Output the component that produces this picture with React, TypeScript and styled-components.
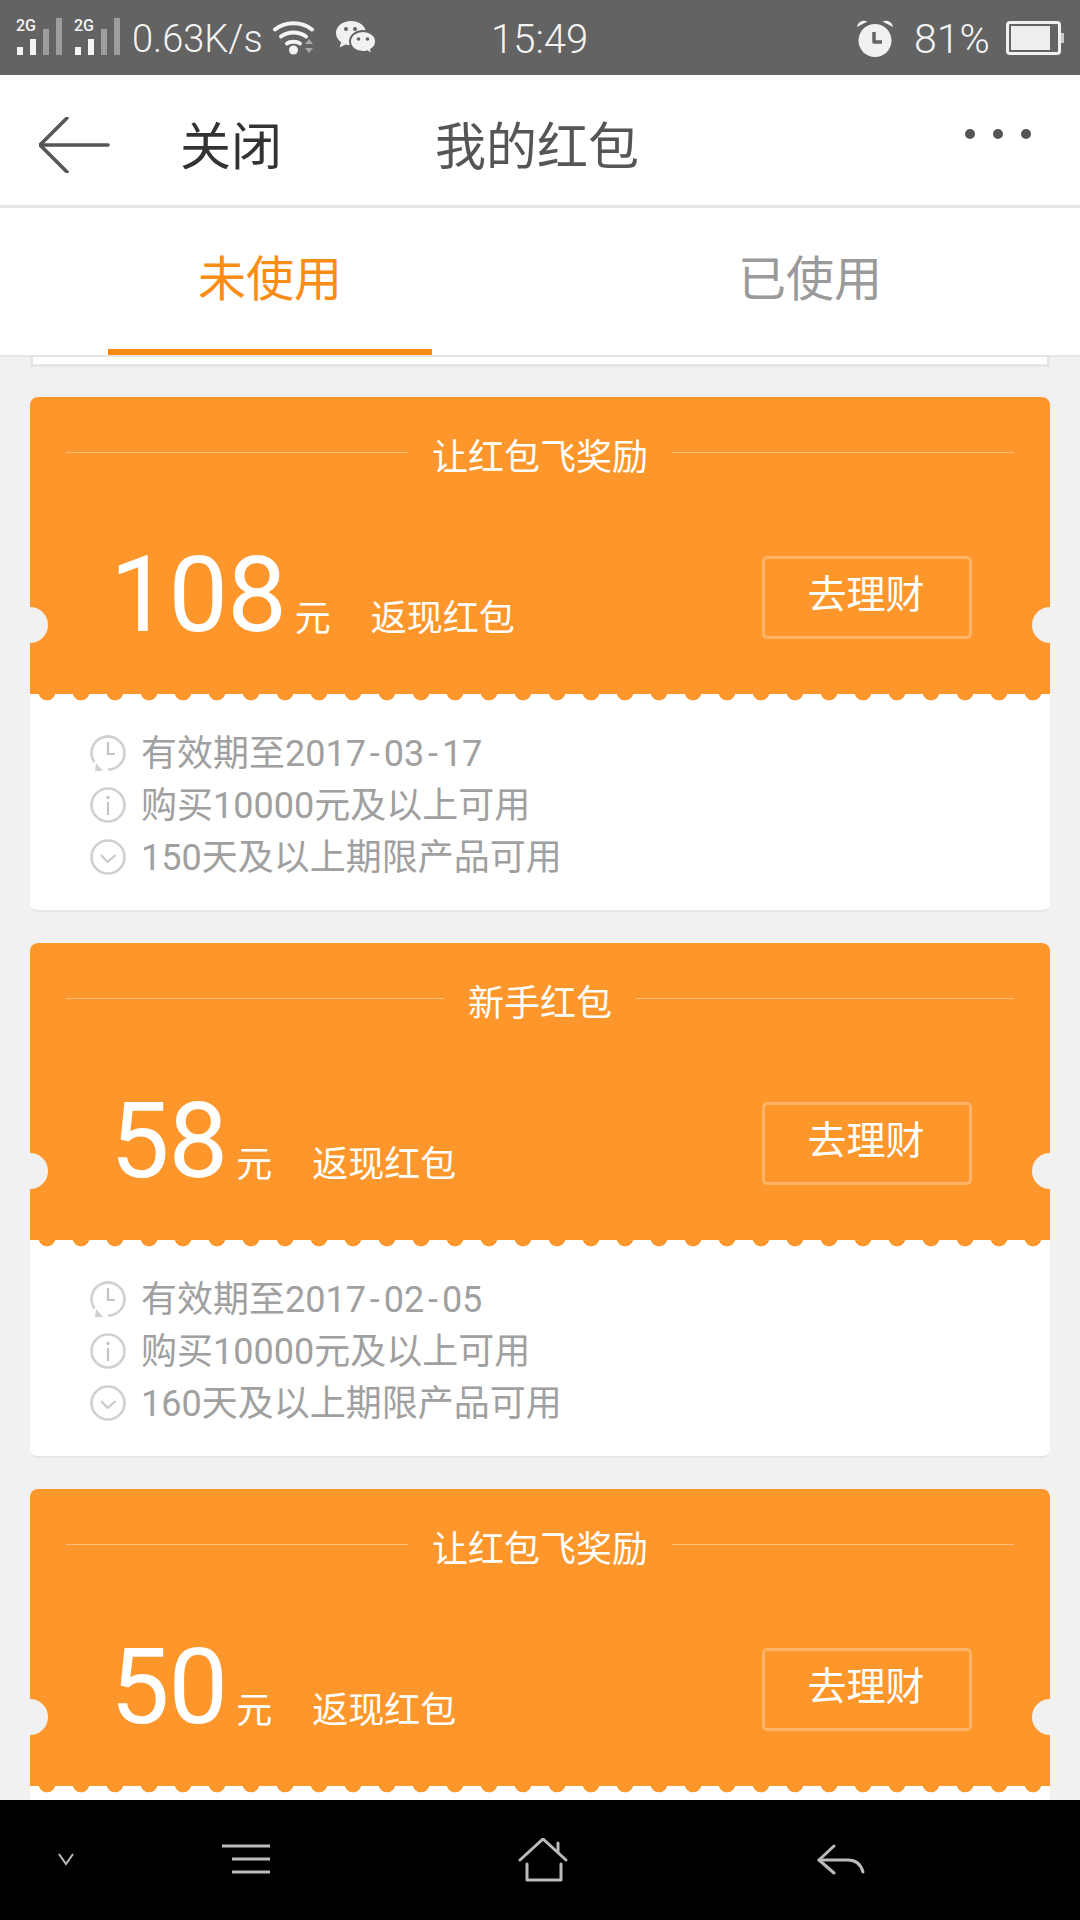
import React from 'react';
import styled, { createGlobalStyle } from 'styled-components';

const orange = '#fe972b';

const GlobalStyle = createGlobalStyle`
  html, body {
    margin: 0;
    padding: 0;
    background: #f1f1f1;
  }
  * {
    box-sizing: border-box;
  }
`;

const Page = styled.div`
  width: 1080px;
  height: 1920px;
  display: flex;
  flex-direction: column;
  overflow: hidden;
  background: #f1f1f1;
  font-family: Roboto, "Noto Sans CJK SC", sans-serif;
`;

const StatusBar = styled.div`
  height: 75px;
  flex: none;
  display: flex;
  align-items: center;
  background: #636363;
  color: #f4f4f4;
  font-weight: 300;
  padding-left: 16px;
`;

const StatusLeft = styled.div`
  width: 475px;
  display: flex;
  align-items: center;
`;

const SignalSvg = styled.svg`
  flex: none;
  margin-top: -11px;
`;

const Speed = styled.span`
  width: 141px;
  padding-top: 3px;
  font-size: 38px;
`;

const WechatSlot = styled.span`
  display: flex;
  margin-left: 20px;
`;

const Clock = styled.span`
  width: 365px;
  padding-top: 3px;
  font-size: 40px;
`;

const Percent = styled.span`
  margin: 0 16px 0 20px;
  padding-top: 3px;
  font-size: 41px;
`;

const Header = styled.div`
  height: 133px;
  flex: none;
  display: flex;
  align-items: center;
  background: #fff;
  border-bottom: 3px solid #e6e6e6;
  padding: 6px 0 0 39px;
`;

const BackSvg = styled.svg`
  flex: none;
  margin-top: 4px;
`;

const CloseLabel = styled.span`
  font-size: 51px;
  color: #333;
  margin-left: 70px;
  width: 255px;
`;

const Title = styled.span`
  font-size: 51px;
  color: #555;
  flex: 1;
`;

const MoreDots = styled.div`
  display: flex;
  gap: 18px;
  margin: 0 49px 18px 0;
`;

const Dot = styled.i`
  width: 10px;
  height: 10px;
  border-radius: 50%;
  background: #555;
`;

const Tabs = styled.div`
  height: 149px;
  flex: none;
  display: flex;
  background: #fff;
  border-bottom: 2px solid #e5e5e5;
`;

const Tab = styled.div<{ $active?: boolean }>`
  flex: 1;
  display: flex;
  align-items: center;
  justify-content: center;
  position: relative;
  font-size: 48px;
  padding-bottom: 14px;
  color: ${p => (p.$active ? '#fb8c14' : '#9a9a9a')};
  &::after {
    content: '';
    display: ${p => (p.$active ? 'block' : 'none')};
    position: absolute;
    left: 108px;
    width: 324px;
    bottom: 0;
    height: 6px;
    background: #fb8a10;
  }
`;

const List = styled.div`
  flex: 1;
  min-height: 0;
  overflow: hidden;
  display: flex;
  flex-direction: column;
  gap: 31px;
  padding: 0 30px;
`;

const PreviousCardEnd = styled.div`
  height: 10px;
  flex: none;
  margin-bottom: -1px;
  background: #fff;
  border: 3px solid #e5e5e5;
  border-top: 0;
`;

const Card = styled.div`
  flex: none;
  height: 515px;
  position: relative;
  background: #fff;
  border-radius: 8px;
  border-bottom: 2px solid #e6e6e6;
`;

const CardTop = styled.div`
  height: 297px;
  position: relative;
  background: ${orange};
  border-radius: 8px 8px 0 0;
  color: #fff;
  padding-top: 40px;
  &::after {
    content: '';
    position: absolute;
    left: 0;
    right: 0;
    top: 100%;
    height: 7px;
    background: radial-gradient(circle at 17px -2px, ${orange} 8px, transparent 8.7px) 0 0 / 34px 7px repeat-x;
  }
`;

const Notch = styled.i<{ $side: 'left' | 'right' }>`
  position: absolute;
  top: 210px;
  ${p => p.$side}: -18px;
  width: 36px;
  height: 36px;
  border-radius: 50%;
  background: #f1f1f1;
`;

const TitleRow = styled.div`
  height: 42px;
  display: flex;
  align-items: center;
  gap: 24px;
  padding: 0 36px;
  font-size: 36px;
  line-height: 42px;
`;

const TitleLine = styled.i`
  flex: 1;
  height: 1px;
  margin-bottom: 12px;
  background: rgba(255, 255, 255, 0.4);
`;

const AmountRow = styled.div`
  height: 83px;
  margin-top: 77px;
  padding: 0 78px;
  display: flex;
  align-items: center;
  justify-content: space-between;
`;

const Amount = styled.div`
  display: flex;
  align-items: baseline;
  line-height: 83px;
  margin: 19px 0 0 2px;
  font-size: 36px;
`;

const Value = styled.span`
  font-size: 106px;
  letter-spacing: -1px;
`;

const Unit = styled.span`
  margin-left: 9px;
`;

const Kind = styled.span`
  margin-left: 40px;
`;

const ActionButton = styled.div`
  width: 210px;
  height: 83px;
  display: flex;
  align-items: center;
  justify-content: center;
  padding: 0 2px 14px 0;
  border: 3px solid rgba(255, 255, 255, 0.28);
  border-radius: 5px;
  font-size: 39px;
`;

const Rules = styled.div`
  padding: 30px 0 0 60px;
`;

const RuleRow = styled.div`
  height: 52px;
  display: flex;
  align-items: center;
  gap: 15px;
  font-size: 36px;
  color: #a0a0a0;
  svg {
    flex: none;
    margin-top: 6px;
  }
`;

const DateHyphen = styled.span`
  padding: 0 3.9px;
`;

const NavBar = styled.div`
  height: 120px;
  flex: none;
  display: flex;
  background: #000;
  position: relative;
`;

const SignalIcon = () => (
  <SignalSvg width="58" height="46" viewBox="0 0 58 46">
    <text x="0" y="22" fill="#f4f4f4" fontSize="16" fontWeight="500" fontFamily="Roboto, sans-serif">2G</text>
    <rect x="1" y="38" width="6" height="8" fill="#f4f4f4" />
    <rect x="14" y="30" width="6" height="16" fill="#f4f4f4" />
    <rect x="27" y="20" width="6" height="26" fill="#9d9d9d" />
    <rect x="40" y="9" width="6" height="37" fill="#9d9d9d" />
  </SignalSvg>
);

const WifiIcon = () => (
  <svg width="42" height="36" viewBox="0 0 42 36" fill="none" stroke="#f4f4f4" strokeWidth="4" strokeLinecap="round">
    <path d="M2 9.5C12 1 29 1 39 9.5" />
    <path d="M8 16.5C15 11 26 11 33 16.5" />
    <path d="M14 23.5C17 21 24 21 27 23.5" />
    <circle cx="20.5" cy="30" r="4.5" fill="#f4f4f4" stroke="none" />
    <path d="M32 24l4-5 4 5zM32 28l4 5 4-5z" fill="#a9a9a9" stroke="none" />
  </svg>
);

const WechatIcon = () => (
  <svg width="42" height="36" viewBox="0 0 42 36">
    <path d="M16 1C7.500 1 1 6.500 1 13c0 3.800 2.100 7 5.200 9.300L4.500 27.500l6-3c1.700.5 3.500.8 5.500.8 8.500 0 15-5.500 15-12.300S24.500 1 16 1z" fill="#f1f1f1" />
    <path d="M28 11c-7.200 0-13 4.700-13 10.500S20.800 32 28 32c1.500 0 2.800-.2 4.100-.6l5.400 3-1.400-4.700c3-1.900 4.900-4.900 4.900-8.200C41 15.700 35.200 11 28 11z" fill="#f1f1f1" stroke="#636363" strokeWidth="2" />
    <circle cx="11" cy="9" r="2" fill="#636363" />
    <circle cx="20" cy="9" r="2" fill="#636363" />
    <circle cx="23.500" cy="19" r="1.800" fill="#636363" />
    <circle cx="32.500" cy="19" r="1.800" fill="#636363" />
  </svg>
);

const AlarmIcon = () => (
  <svg width="38" height="38" viewBox="0 0 38 38">
    <circle cx="19" cy="21.500" r="16.500" fill="#f1f1f1" />
    <path d="M1 8C2 2.500 7 .5 11.500 2.500zM37 8C36 2.500 31 .5 26.500 2.500z" fill="#f1f1f1" />
    <path d="M18 13v10h8" fill="none" stroke="#636363" strokeWidth="3.500" strokeLinejoin="round" />
  </svg>
);

const BatteryIcon = () => (
  <svg width="59" height="34" viewBox="0 0 59 34">
    <rect x="1.500" y="1.500" width="52" height="31" rx="2.500" fill="none" stroke="#f1f1f1" strokeWidth="3" />
    <rect x="5" y="5" width="39" height="24" fill="#eeeeee" />
    <rect x="55" y="12" width="3" height="10" fill="#c9c9c9" />
  </svg>
);

const BackArrow = () => (
  <BackSvg width="71" height="56" viewBox="0 0 71 56" fill="none" stroke="#555" strokeWidth="3.500" strokeLinecap="round" strokeLinejoin="round">
    <path d="M28 1L1 28l27 27" />
    <path d="M1 28h68" />
  </BackSvg>
);

const RuleClock = () => (
  <svg width="36" height="36" viewBox="0 0 36 36" fill="none" stroke="#d0d0d0" strokeWidth="2.600">
    <path d="M18 34.500C26 34.800 34.500 28 34.500 18A16.500 16.500 0 1 0 4.500 27.500" />
    <path d="M18 7v12h7" strokeWidth="2.200" stroke="#c4c4c4" />
    <path d="M5 36h8l-7-8z" fill="#d0d0d0" stroke="none" />
  </svg>
);

const RuleInfo = () => (
  <svg width="36" height="36" viewBox="0 0 36 36" fill="none" stroke="#d0d0d0" strokeWidth="2.600">
    <circle cx="18" cy="18" r="16.500" />
    <circle cx="18" cy="10.500" r="1.700" fill="#c4c4c4" stroke="none" />
    <path d="M18 15v13" stroke="#c4c4c4" strokeWidth="2.200" />
  </svg>
);

const RuleCheck = () => (
  <svg width="36" height="36" viewBox="0 0 36 36" fill="none" stroke="#d0d0d0" strokeWidth="2.600">
    <circle cx="18" cy="18" r="16.500" />
    <path d="M11.500 16.500l6 6.500 7.500-6.500" strokeWidth="2" stroke="#c8c8c8" strokeLinecap="round" strokeLinejoin="round" />
  </svg>
);

const NavDown = styled.svg`
  position: absolute;
  left: 56px;
  top: 52px;
`;

const NavMenu = styled.svg`
  position: absolute;
  left: 222px;
  top: 44px;
`;

const NavHome = styled.svg`
  position: absolute;
  left: 518px;
  top: 38px;
`;

const NavBack = styled.svg`
  position: absolute;
  left: 816px;
  top: 44px;
`;

type Coupon = {
  title: string;
  value: string;
  rules?: { expires: string; days: string };
};

const coupons: Coupon[] = [
  { title: '让红包飞奖励', value: '108', rules: { expires: '2017-03-17', days: '150' } },
  { title: '新手红包', value: '58', rules: { expires: '2017-02-05', days: '160' } },
  { title: '让红包飞奖励', value: '50' },
];

const DateText = ({ value }: { value: string }) => {
  const [y, m, d] = value.split('-');
  return (
    <span>
      {y}<DateHyphen>-</DateHyphen>{m}<DateHyphen>-</DateHyphen>{d}
    </span>
  );
};

const CouponCard = ({ coupon }: { coupon: Coupon }) => (
  <Card>
    <CardTop>
      <TitleRow>
        <TitleLine />
        <span>{coupon.title}</span>
        <TitleLine />
      </TitleRow>
      <AmountRow>
        <Amount>
          <Value>{coupon.value}</Value>
          <Unit>元</Unit>
          <Kind>返现红包</Kind>
        </Amount>
        <ActionButton>去理财</ActionButton>
      </AmountRow>
    </CardTop>
    <Notch $side="left" />
    <Notch $side="right" />
    {coupon.rules && (
      <Rules>
        <RuleRow><RuleClock /><span>有效期至<DateText value={coupon.rules.expires} /></span></RuleRow>
        <RuleRow><RuleInfo />购买10000元及以上可用</RuleRow>
        <RuleRow><RuleCheck />{coupon.rules.days}天及以上期限产品可用</RuleRow>
      </Rules>
    )}
  </Card>
);

const App = () => (
  <Page>
    <GlobalStyle />
    <StatusBar>
      <StatusLeft>
        <SignalIcon />
        <SignalIcon />
        <Speed>0.63K/s</Speed>
        <WifiIcon />
        <WechatSlot><WechatIcon /></WechatSlot>
      </StatusLeft>
      <Clock>15:49</Clock>
      <AlarmIcon />
      <Percent>81%</Percent>
      <BatteryIcon />
    </StatusBar>
    <Header>
      <BackArrow />
      <CloseLabel>关闭</CloseLabel>
      <Title>我的红包</Title>
      <MoreDots>
        <Dot />
        <Dot />
        <Dot />
      </MoreDots>
    </Header>
    <Tabs>
      <Tab $active>未使用</Tab>
      <Tab>已使用</Tab>
    </Tabs>
    <List>
      <PreviousCardEnd />
      {coupons.map((c, i) => (
        <CouponCard key={i} coupon={c} />
      ))}
    </List>
    <NavBar>
      <NavDown width="20" height="14" viewBox="0 0 20 14" fill="none" stroke="#bbb" strokeWidth="2">
        <path d="M3 2l7 10 7-10" />
      </NavDown>
      <NavMenu width="48" height="32" viewBox="0 0 48 32" stroke="#bbb" strokeWidth="3">
        <path d="M0 2h48M10 15h38M10 28h38" />
      </NavMenu>
      <NavHome width="52" height="46" viewBox="0 0 52 46" fill="none" stroke="#bbb" strokeWidth="3" strokeLinecap="round" strokeLinejoin="round">
        <path d="M2 22L25 1l23 21" />
        <path d="M40 5v9" />
        <path d="M9 26v16h34V26" />
      </NavHome>
      <NavBack width="50" height="34" viewBox="0 0 50 34" fill="none" stroke="#bbb" strokeWidth="3" strokeLinecap="round" strokeLinejoin="round">
        <path d="M18 2L3 16l15 13" />
        <path d="M3 16h29c8 0 13 5 15 12" />
      </NavBack>
    </NavBar>
  </Page>
);

export default App;
